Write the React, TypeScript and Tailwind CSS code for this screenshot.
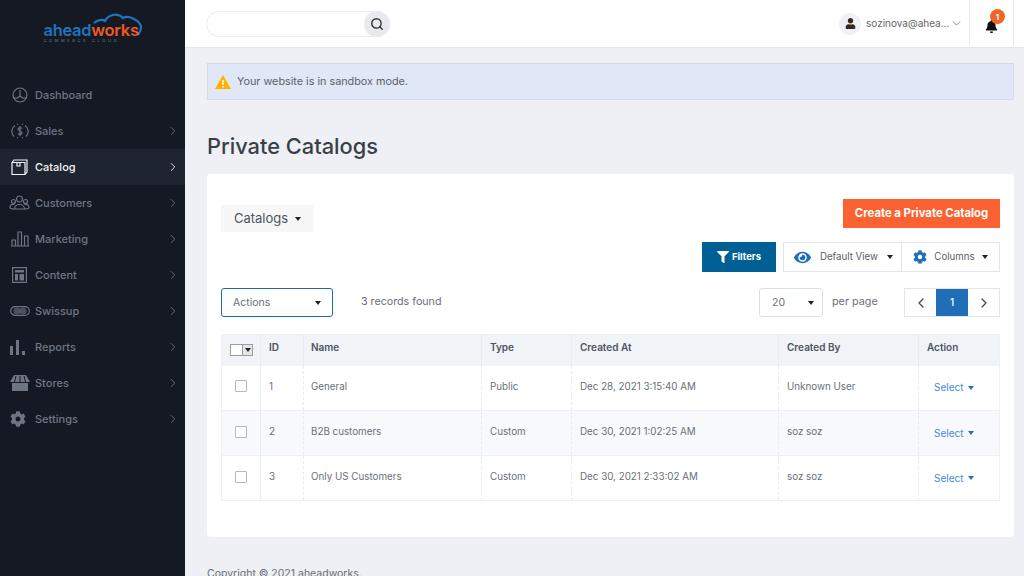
import React from 'react';
import { ChevronRight, ChevronLeft, ChevronDown, Search } from 'lucide-react';
import { FaBell, FaCog, FaEye, FaFilter, FaUser } from 'react-icons/fa';

const font = "font-['Inter','Liberation_Sans',sans-serif]";

const Caret: React.FC<{ className?: string }> = ({ className = 'border-t-[#222]' }) => (
  <span className={`inline-block w-0 h-0 border-x-[3.500px] border-x-transparent border-t-[4px] ${className}`} />
);

const stroke = { fill: 'none', stroke: 'currentColor', strokeWidth: 1.2 };

// sidebar icons, drawn to match the reference
const icons: Record<string, React.ReactNode> = {
  Dashboard: (
    <svg width="16" height="16" viewBox="0 0 16 16" {...stroke}>
      <circle cx="8" cy="8" r="7" />
      <path d="M8 3v6M2 11h3.500L8 9l2.500 2H14" />
    </svg>
  ),
  Sales: (
    <svg width="18" height="16" viewBox="0 0 18 16" {...stroke}>
      <path d="M4 2.500a7 7 0 0 0-1 11M14 2.500a7 7 0 0 1 1 11M6 1.500l1-.5M12 1.500l-1-.5M6 14.500l1 .5M12 14.500l-1 .5" />
      <path d="M11 5.500C10.500 4.500 7 4.300 7 6.200S11 8 11 10s-3.500 1.500-4 .5M9 3v10" />
    </svg>
  ),
  Catalog: (
    <svg width="17" height="16" viewBox="0 0 17 16" {...stroke}>
      <path d="M1 3.500h13v12H1zM1 3.500 3 1h13v12l-2 2.500M6 3.500v3.500h3V3.500" />
    </svg>
  ),
  Customers: (
    <svg width="21" height="16" viewBox="0 0 21 16" {...stroke}>
      <circle cx="10.500" cy="4" r="3" />
      <circle cx="4.500" cy="6.500" r="2" />
      <circle cx="16.500" cy="6.500" r="2" />
      <path d="M5.500 14c0-6 10-6 10 0zM1 12.500c0-3 2-3.500 4.500-3M20 12.500c0-3-2-3.500-4.500-3M1 12.500c0 1 2 1.500 4.500 1.500M20 12.500c0 1-2 1.500-4.500 1.500" />
    </svg>
  ),
  Marketing: (
    <svg width="20" height="16" viewBox="0 0 20 16" {...stroke}>
      <path d="M1 15h18M2 15V9h3.500v6M8 15V1h3.500v14M14.500 15V5H18v10" />
    </svg>
  ),
  Content: (
    <svg width="15" height="16" viewBox="0 0 15 16">
      <path d="M.6.600h13.800v14.800H.6z" {...stroke} />
      <path d="M3 3h9v2.500H3zM3 7h3v6.500H3zM7.500 7H12v6.500H7.500z" fill="currentColor" />
    </svg>
  ),
  Swissup: (
    <svg width="20" height="10" viewBox="0 0 20 10">
      <rect x=".7" y=".7" width="18.600" height="8.600" rx="4.300" {...stroke} />
      <circle cx="7" cy="5" r="3.500" fill="currentColor" opacity=".6" />
      <circle cx="13" cy="5" r="3.500" fill="currentColor" opacity=".6" />
    </svg>
  ),
  Reports: (
    <svg className="-ml-[4px]" width="15" height="15" viewBox="0 0 15 15" fill="currentColor">
      <path d="M0 6h3v9H0zM6 0h3v15H6zM12 11h3v4h-3z" />
    </svg>
  ),
  Stores: (
    <svg width="20" height="16" viewBox="0 0 20 16" fill="currentColor">
      <path d="M4 0h12l4 7H0zM2 8h16v8H2z" />
      <path d="M6 1 4.500 7M10 1v6M14 1l1.500 6" stroke="#141923" strokeWidth="1" />
    </svg>
  ),
  Settings: <FaCog size={16} className="-ml-[4px]" />,
};

const navItems = ['Dashboard', 'Sales', 'Catalog', 'Customers', 'Marketing', 'Content', 'Swissup', 'Reports', 'Stores', 'Settings'];

const rows = [
  { id: 1, name: 'General', type: 'Public', created: 'Dec 28, 2021 3:15:40 AM', by: 'Unknown User' },
  { id: 2, name: 'B2B customers', type: 'Custom', created: 'Dec 30, 2021 1:02:25 AM', by: 'soz soz' },
  { id: 3, name: 'Only US Customers', type: 'Custom', created: 'Dec 30, 2021 2:33:02 AM', by: 'soz soz' },
];

const Sidebar: React.FC = () => (
  <aside className="w-[185px] shrink-0 bg-[#141923] flex flex-col">
    <div className="h-[77px] pt-[12px] flex justify-center">
      <div className="relative w-[100px] h-[34px] pl-[1px]">
        <svg className="absolute left-[50px] top-0" width="50" height="24" viewBox="0 0 50 24" fill="none" stroke="#1f74bd" strokeWidth="2.200">
          <path d="M1 11c3-3 8-4 11-2 3-6 12-9 18-3 3-2 8-1 11 1 5 2 8 7 7 10-1 3-2 4-3 6" />
        </svg>
        <div className="absolute left-[1px] top-[11px] text-[16.500px] leading-[14px] font-semibold tracking-[-0.3px] whitespace-nowrap">
          <span className="text-[#1f74bd]">ahead</span>
          <span className="text-[#ef5a22]">works</span>
        </div>
        <div className="absolute left-[1px] top-[27px] text-[4px] leading-[4px] tracking-[2.650px] text-[#77808c] whitespace-nowrap">COMMERCE CLOUD</div>
      </div>
    </div>
    <nav className="flex flex-col">
      {navItems.map((item) => {
        const active = item === 'Catalog';
        return (
          <div key={item} className={`h-[36px] flex items-center pr-[5px] ${active ? 'bg-[#1e2430] text-[#f2f4f7]' : 'text-[#6f7683]'}`}>
            <span className="w-[35px] shrink-0 flex justify-center pl-[4px]">{icons[item]}</span>
            <span className="text-[11px] font-medium flex-1">{item}</span>
            {item !== 'Dashboard' && <ChevronRight size={14} strokeWidth={1.500} />}
          </div>
        );
      })}
    </nav>
  </aside>
);

const Header: React.FC = () => (
  <header className="h-[48px] shrink-0 bg-white border-b border-[#e3e5ea] flex items-center pl-[21px]">
    <div className="w-[184px] h-[26px] border border-[#ebecef] rounded-full flex justify-end">
      <span className="w-[26px] h-[26px] -m-[1px] rounded-full bg-[#e9eaee] flex items-center justify-center text-[#333]">
        <Search size={14} strokeWidth={2.400} />
      </span>
    </div>
    <div className="ml-auto h-full flex items-center">
      <span className="w-[22px] h-[22px] rounded-full bg-[#eef0f5] flex items-center justify-center text-[#33291f]">
        <FaUser size={11} />
      </span>
      <span className="ml-[5px] text-[10px] text-[#666] w-[84px] whitespace-nowrap">sozinova@ahea...</span>
      <ChevronDown size={13} strokeWidth={1.200} className="text-[#555] mr-[6px]" />
      <div className="relative w-[45px] h-[46px] border-x border-[#e9eaee] self-start flex items-center justify-center">
        <FaBell size={13} className="text-[#111] mt-[6px]" />
        <span className="absolute left-[20px] top-[9px] w-[15px] h-[15px] rounded-full bg-[#f1652a] text-white text-[8px] font-bold flex items-center justify-center">1</span>
      </div>
      <div className="w-[10px]" />
    </div>
  </header>
);

const thClass = 'px-[8px] pb-[5px] text-left text-[10px] font-semibold text-[#4d5560] border-r border-[#e8ebf1]';
const tdClass = 'px-[8px] text-[9.800px] text-[#6a6f78] border-r border-dashed border-[#e8ebf1] pb-[1px]';

const CatalogTable: React.FC = () => (
  <table className="w-[778px] table-fixed border-collapse border border-[#eef0f5]">
    <colgroup>
      <col className="w-[39px]" />
      <col className="w-[43px]" />
      <col className="w-[178px]" />
      <col className="w-[90px]" />
      <col className="w-[207px]" />
      <col className="w-[140px]" />
      <col className="w-[81px]" />
    </colgroup>
    <thead>
      <tr className="h-[31px] bg-[#f0f3f8]">
        <th className={`${thClass} !px-0 !pb-0`}>
          <div className="ml-[8px] w-[23px] h-[12px] border border-[#9a9ea5] flex">
            <span className="w-[12px] bg-white border-r border-[#9a9ea5]" />
            <span className="flex-1 bg-[#e5e5e5] flex items-center justify-center">
              <Caret className="border-t-[#222]" />
            </span>
          </div>
        </th>
        <th className={thClass}>ID</th>
        <th className={`${thClass} !pl-[7px]`}>Name</th>
        <th className={thClass}>Type</th>
        <th className={thClass}>Created At</th>
        <th className={thClass}>Created By</th>
        <th className={`${thClass} border-r-0`}>Action</th>
      </tr>
    </thead>
    <tbody>
      {rows.map((row, i) => (
        <tr key={row.id} className={`h-[45px] border-b border-[#eef0f5] ${i === 1 ? 'bg-[#f8f9fc]' : 'bg-white'}`}>
          <td className={`${tdClass} !border-solid`}>
            <div className="ml-[5px] mb-[2px] w-[12px] h-[12px] border border-[#b5b8bd] rounded-[1px] bg-white" />
          </td>
          <td className={tdClass}>{row.id}</td>
          <td className={`${tdClass} !pl-[7px]`}>{row.name}</td>
          <td className={tdClass}>{row.type}</td>
          <td className={tdClass}>{row.created}</td>
          <td className={tdClass}>{row.by}</td>
          <td className="pl-[15px] text-[10px] text-[#3f8ae0]">
            <span className="inline-flex items-center gap-[5px]">
              Select <Caret className="border-t-[#1f74bd]" />
            </span>
          </td>
        </tr>
      ))}
    </tbody>
  </table>
);

const CatalogCard: React.FC = () => (
  <section className="mt-[13px] h-[363px] bg-white rounded-[4px] px-[14px] pt-[25px]">
    <div className="flex justify-between">
      <div className="mt-[6px] w-[93px] h-[27px] bg-[#f7f7f7] flex items-center justify-center gap-[7px] text-[13px] text-[#4d5560]">
        Catalogs <Caret />
      </div>
      <div className="w-[157px] h-[29px] bg-[#fa6232] text-white text-[11.300px] font-bold flex items-center justify-center">
        Create a Private Catalog
      </div>
    </div>

    <div className="mt-[10px] flex justify-end gap-[7px] -mb-[1px]">
      <div className="w-[74px] h-[30px] bg-[#005f95] text-white text-[9.500px] font-bold flex items-center justify-center gap-[3px]">
        <FaFilter size={12} />
        Filters
      </div>
      <div className="h-[30px] flex border border-[#e3e5ec] text-[9.700px] text-[#5b6068]">
        <div className="w-[118px] flex items-center justify-center gap-[9px] pl-[2px] border-r border-[#e3e5ec]">
          <FaEye size={17} className="text-[#1f6fb8]" />
          Default View <Caret />
        </div>
        <div className="w-[97px] flex items-center justify-center gap-[7px]">
          <FaCog size={14} className="text-[#1f6fb8]" />
          Columns <Caret />
        </div>
      </div>
    </div>

    <div className="mt-[17px] flex items-center">
      <div className="w-[112px] h-[29px] border border-[#1c6a9e] rounded-[3px] flex items-center justify-between px-[11px] text-[10.500px] text-[#6a6f78]">
        Actions <Caret />
      </div>
      <span className="ml-[28px] text-[10.700px] text-[#6a6f78]">3 records found</span>
      <div className="ml-auto w-[64px] h-[29px] border border-[#dcdfe5] rounded-[3px] flex items-center justify-between pl-[12px] pr-[8px] text-[10.500px] text-[#6a6f78]">
        20 <Caret />
      </div>
      <span className="ml-[9px] w-[72px] text-[10.800px] text-[#6a6f78]">per page</span>
      <div className="h-[29px] flex border border-[#e3e5ec] text-[#444]">
        <span className="w-[31px] flex items-center justify-center"><ChevronLeft size={16} strokeWidth={1.800} /></span>
        <span className="w-[32px] bg-[#1f6fb8] text-white text-[10px] font-medium flex items-center justify-center">1</span>
        <span className="w-[31px] flex items-center justify-center"><ChevronRight size={16} strokeWidth={1.800} /></span>
      </div>
    </div>

    <div className="mt-[17px]">
      <CatalogTable />
    </div>
  </section>
);

export default function App() {
  return (
    <div className={`${font} w-[1024px] h-[576px] flex overflow-hidden bg-[#eef0f5]`}>
      <Sidebar />
      <div className="flex-1 min-w-0 flex flex-col">
        <Header />
        <main className="pl-[22px] pr-[10px] pt-[15px]">
          <div className="h-[37px] pt-[1px] bg-[#e0e8f8] border border-[#d3daea] flex items-center pl-[7px] gap-[6px] text-[10.800px] text-[#5b6068]">
            <svg width="16" height="14" viewBox="0 0 16 14">
              <path d="M8 0 16 14H0z" fill="#ffb000" />
              <path d="M7.300 5h1.400v5H7.300zM7.300 11h1.400v1.400H7.300z" fill="#fff" />
            </svg>
            Your website is in sandbox mode.
          </div>
          <h1 className="mt-[31px] text-[21.800px] leading-[30px] font-medium text-[#3a3f47]">Private Catalogs</h1>
          <CatalogCard />
          <p className="mt-[29px] text-[10.500px] text-[#6a6f78]">Copyright © 2021 aheadworks.</p>
        </main>
      </div>
    </div>
  );
}
